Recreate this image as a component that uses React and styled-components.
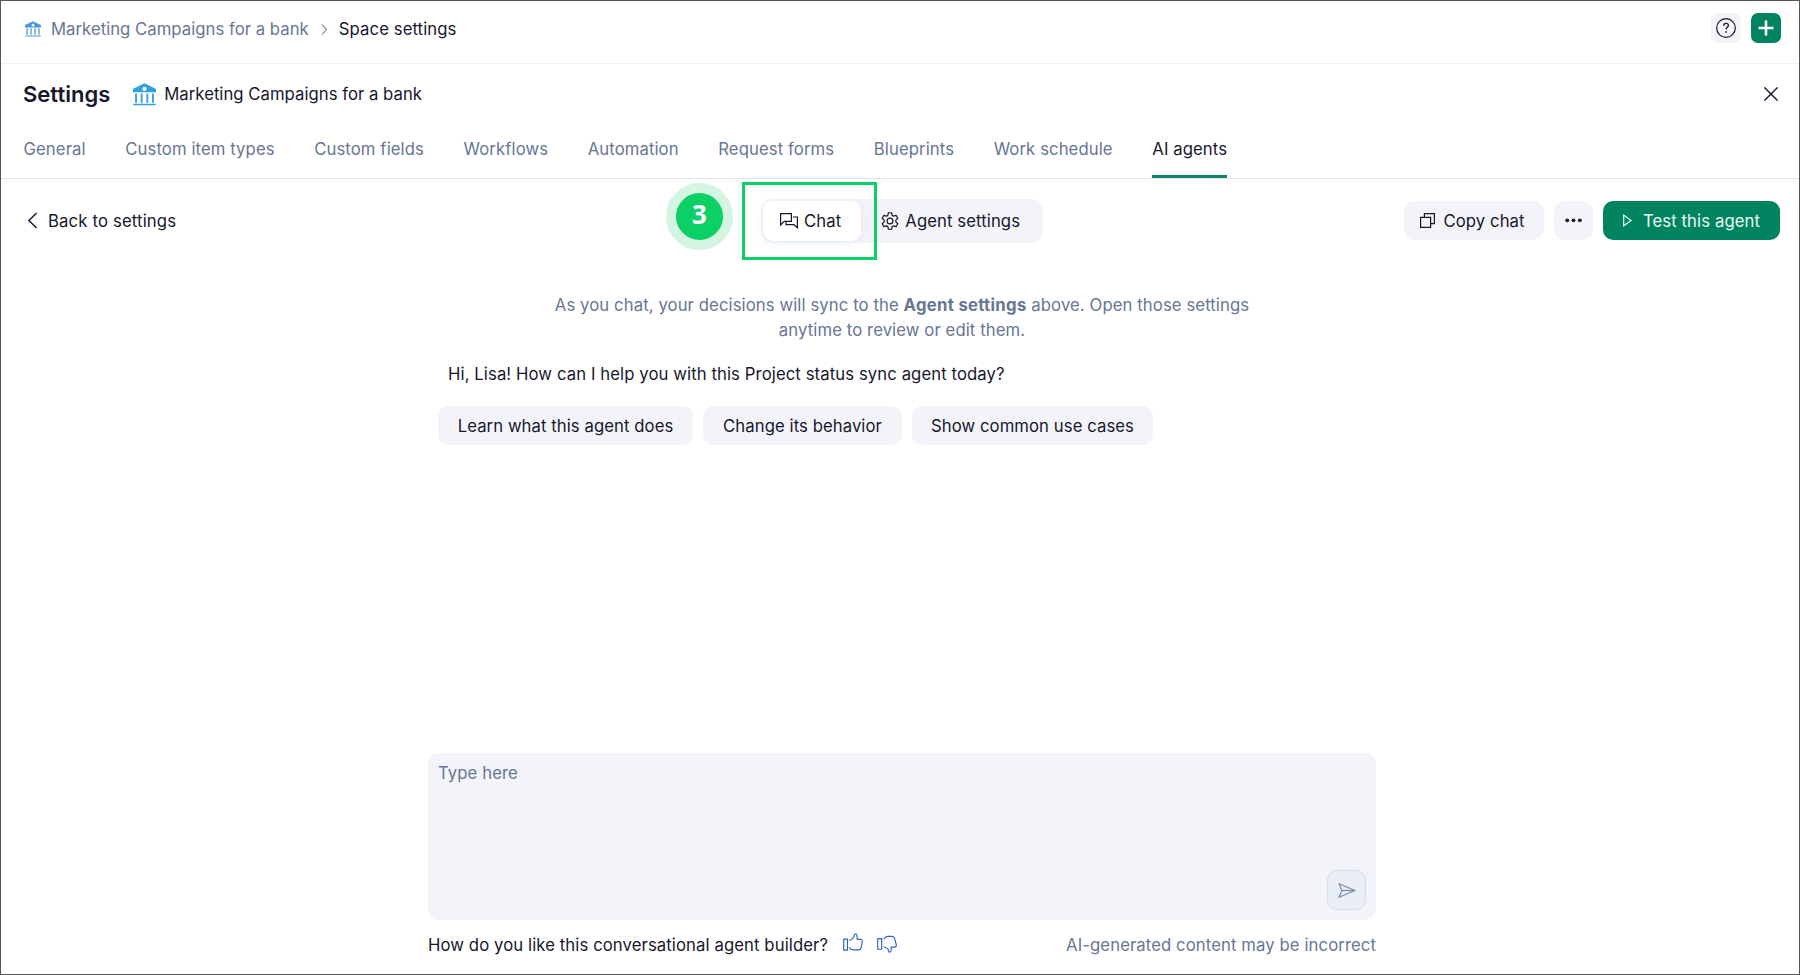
import styled, { createGlobalStyle } from "styled-components";

const GlobalStyle = createGlobalStyle`
  * {
    box-sizing: border-box;
  }
  body {
    margin: 0;
    background: #fff;
    color: #17162c;
    font-family: Inter, "Liberation Sans", sans-serif;
    font-size: 16.7px;
    letter-spacing: 0.095px;
    line-height: 25px;
  }
  button,
  textarea {
    font: inherit;
    letter-spacing: inherit;
    color: inherit;
    border: 0;
    padding: 0;
    margin: 0;
    background: none;
  }
  svg {
    display: block;
    flex: none;
  }
`;

const Page = styled.div`
  width: 1800px;
  height: 975px;
  border: 1px solid #555558;
  display: flex;
  flex-direction: column;
  overflow: hidden;
`;

const TopBar = styled.header`
  height: 63px;
  padding: 0 18px 8px 24px;
  border-bottom: 1px solid #f1f1f4;
  display: flex;
  align-items: center;
  justify-content: space-between;
`;

const Breadcrumbs = styled.nav`
  display: flex;
  align-items: center;
  padding-top: 2px;
`;

const SpaceLink = styled.a`
  color: #667694;
  letter-spacing: 0.03px;
  margin: 0 12px 0 10px;
`;

const CurrentPage = styled.span`
  margin-left: 11px;
`;

const TopActions = styled.div`
  display: flex;
  gap: 10px;
`;

const SquareButton = styled.button`
  width: 30px;
  height: 30px;
  border-radius: 7px;
  background: ${(p) => (p.$primary ? "#00835f" : "#f3f4fa")};
  display: flex;
  align-items: center;
  justify-content: center;
`;

const TitleBar = styled.div`
  height: 63px;
  padding: 0 21px 3px 22px;
  display: flex;
  align-items: center;
`;

const Title = styled.h1`
  margin: 0 23px 0 0;
  font-size: 22px;
  font-weight: 600;
  letter-spacing: 0;
`;

const SpaceName = styled.span`
  flex: 1;
  margin-left: 8px;
  letter-spacing: 0.03px;
`;

const Tabs = styled.nav`
  height: 52px;
  padding-left: 22.5px;
  border-bottom: 1px solid #dbe2ee;
  display: flex;
  gap: 39.6px;
`;

const Tab = styled.a`
  height: 51px;
  padding-top: 10px;
  border-bottom: 3px solid ${(p) => (p.$active ? "#0b8563" : "transparent")};
  color: ${(p) => (p.$active ? "#17162c" : "#667694")};
`;

const Toolbar = styled.div`
  height: 83px;
  padding: 0 19px 0 26px;
  display: grid;
  grid-template-columns: 734px 282px 1fr;
  align-items: center;
`;

const BackLink = styled.a`
  display: flex;
  align-items: center;
  gap: 10px;
  letter-spacing: 0.16px;
`;

const Label = styled.span`
  padding-top: 2px;
`;

const Switcher = styled.div`
  position: relative;
  height: 44px;
  padding: 2px;
  border-radius: 12px;
  background: #f3f4fa;
  display: flex;
  align-items: center;
`;

const Segment = styled.button`
  height: 40px;
  padding: 0 20px 0 ${(p) => (p.$active ? 17 : 20)}px;
  border-radius: 10px;
  background: ${(p) => (p.$active ? "#fff" : "transparent")};
  box-shadow: ${(p) => (p.$active ? "0 2px 10px rgba(200, 215, 235, 0.35)" : "none")};
  display: flex;
  align-items: center;
  gap: 6px;
  white-space: nowrap;
`;

const Highlight = styled.div`
  position: absolute;
  left: -19px;
  top: -16.5px;
  width: 135px;
  height: 78px;
  border: 3px solid #0bd066;
`;

const StepBadge = styled.div`
  position: absolute;
  left: -95px;
  top: -15.5px;
  width: 67px;
  height: 67px;
  border: 10.5px solid #d4f5e1;
  border-radius: 50%;
  background: #0bd066;
  color: #fff;
  font: 700 26px/43px "Open Sans", sans-serif;
  letter-spacing: 0;
  text-align: center;
`;

const ToolbarActions = styled.div`
  display: flex;
  justify-content: flex-end;
  gap: 10px;
`;

const Button = styled.button`
  height: 39px;
  width: ${(p) => p.$width}px;
  border-radius: 10px;
  background: ${(p) => (p.$primary ? "#00835f" : "#f3f4fa")};
  color: ${(p) => (p.$primary ? "#eefaf6" : "inherit")};
  display: flex;
  align-items: center;
  justify-content: center;
  gap: ${(p) => (p.$primary ? 11 : 8)}px;
  white-space: nowrap;
`;

const CopyButton = styled(Button)`
  padding-right: 3px;
`;

const Conversation = styled.main`
  width: 948px;
  margin-left: 427px;
  padding-top: 31px;
  flex: 1;
  display: flex;
  flex-direction: column;
`;

const SyncNote = styled.p`
  width: 720px;
  margin: 0 auto;
  text-align: center;
  color: #667694;
  b {
    letter-spacing: 0.3px;
  }
`;

const Greeting = styled.p`
  margin: 19px 0 0 20px;
`;

const Suggestions = styled.div`
  display: flex;
  gap: 10px;
  margin: 19px 0 0 10px;
  letter-spacing: 0.07px;
`;

const Composer = styled.div`
  height: 167px;
  margin-top: auto;
  padding: 8px 10px 10px;
  border-radius: 10px;
  background: #f3f4fa;
  display: flex;
  align-items: flex-end;
`;

const Input = styled.textarea`
  flex: 1;
  align-self: stretch;
  resize: none;
  outline: none;
  &::placeholder {
    color: #667694;
    opacity: 1;
  }
`;

const SendButton = styled.button`
  width: 39px;
  height: 40px;
  border: 1px solid #d4deed;
  border-radius: 10px;
  background: #eaeef6;
  display: flex;
  align-items: center;
  justify-content: center;
`;

const Footer = styled.footer`
  height: 54px;
  padding-top: 13px;
  display: flex;
  align-items: flex-start;
`;

const Thumb = styled.button`
  margin: ${(p) => (p.$down ? "2px 0 0 14px" : "0 0 0 15px")};
`;

const Disclaimer = styled.span`
  margin-left: auto;
  color: #667694;
`;

const BankIcon = ({ size, color }) => (
  <svg width={size} height={size} viewBox="0 0 22 22" fill={color}>
    <path
      fillRule="evenodd"
      d="M11 0.3 21.2 5.2Q22 5.6 22 6.4V8.8H0V6.4Q0 5.6 .8 5.2ZM11 3.7A2 2 0 1 0 11 7.7A2 2 0 1 0 11 3.7Z"
    />
    <path d="M2 10h1.8v9H2zM7.4 10h1.8v9H7.4zM12.8 10h1.8v9h-1.8zM18.2 10H20v9h-1.8zM.3 19.8h21.4v1.6H.3z" />
  </svg>
);

const Chevron = ({ width, height, left, color, weight }) => (
  <svg width={width} height={height} viewBox="0 0 10 18" fill="none" stroke={color} strokeWidth={weight}>
    <path d={left ? "M9.3 1 1.2 9l8.1 8" : "M1 1l7.5 8L1 17"} />
  </svg>
);

const HelpIcon = () => (
  <svg width="20" height="20" viewBox="0 0 20 20" fill="none" stroke="#17162c" strokeWidth="1.2">
    <circle cx="10" cy="10" r="9.3" />
    <path d="M7.7 7.7C7.7 6.3 8.6 5.4 10 5.4s2.4.9 2.4 2.1c0 1.8-2.3 1.9-2.3 4.1" strokeWidth="1.3" />
    <path d="M9.3 13.2h1.6v1.5H9.3z" fill="#17162c" stroke="none" />
  </svg>
);

const PlusIcon = () => (
  <svg width="16" height="16" viewBox="0 0 16 16" fill="#fff">
    <path d="M6.7.5h2.6v15H6.7zM.5 6.7h15v2.6H.5z" />
  </svg>
);

const CloseIcon = () => (
  <svg width="14" height="14" viewBox="0 0 14 14" stroke="#17162c" strokeWidth="1.4">
    <path d="M.4.4l13.2 13.2M13.6.4.4 13.6" />
  </svg>
);

const ChatIcon = () => (
  <svg width="18" height="17" viewBox="0 0 18 17" fill="none" stroke="#17162c" strokeWidth="1.2">
    <path d="M.6 13V1.6h10.8v7.8H4.2Z" />
    <path d="M13 5h4.4v10.8L14 12.6H6V9.6" />
  </svg>
);

// Six rounded teeth around a small hub.
const GearIcon = () => (
  <svg width="18" height="18" viewBox="0 0 24 24" fill="none" stroke="#17162c" strokeWidth="1.6" strokeLinejoin="round">
    <circle cx="12" cy="12" r="3.9" />
    <path d="M9.9 1h4.2l.8 3.5 1.9 1.1 3.5-1 2.1 3.7-2.6 2.5v2.4l2.6 2.5-2.1 3.7-3.5-1-1.9 1.1-.8 3.5H9.9l-.8-3.5-1.9-1.1-3.5 1-2.1-3.7 2.6-2.5v-2.4L1.6 8.3l2.1-3.7 3.5 1 1.9-1.1Z" />
  </svg>
);

const CopyIcon = () => (
  <svg width="15" height="15" viewBox="0 0 15 15" fill="none" stroke="#17162c" strokeWidth="1.2">
    <path d="M.6 4.4h10v10H.6z" />
    <path d="M4.4 4.4V.6h10v10h-3.8" />
  </svg>
);

const DotsIcon = () => (
  <svg width="17" height="5" viewBox="0 0 17 5" fill="#17162c">
    <circle cx="2.2" cy="2.3" r="1.9" />
    <circle cx="8.5" cy="2.3" r="1.9" />
    <circle cx="14.8" cy="2.3" r="1.9" />
  </svg>
);

const PlayIcon = () => (
  <svg width="9" height="13" viewBox="0 0 9 13" fill="none" stroke="#eefaf6" strokeWidth="1.2">
    <path d="M.7 1.1v10.6L8 6.4Z" />
  </svg>
);

const SendIcon = () => (
  <svg width="18" height="15" viewBox="0 0 18 15" fill="none" stroke="#7c8aa8" strokeWidth="1.2" strokeLinejoin="round">
    <path d="M.9.8 17 7.5.9 14.3 4 7.5Z" />
    <path d="M4 7.5h13" />
  </svg>
);

const ThumbIcon = ({ down }) => (
  <svg width="20" height="18" viewBox="0 0 20 18" fill="none" stroke="#2f63c0" strokeWidth="1.15" strokeLinejoin="round">
    {down ? (
      <>
        <path d="M.7 3.6h4v10.6h-4z" />
        <path d="M6.6 4.3Q8.3 1.6 10.5 1.4h4.1q2.5.1 3.1 2.2l1.6 6.2q.3 2.1-1.6 2.3h-3.5v3.2q-.1 1.8-1.5 1.8-1 0-1.1-1.1c0-2.4-2.6-3.5-5-4.2" />
      </>
    ) : (
      <>
        <path d="M.7 6.1h3.8v11H.7z" />
        <path d="M6.2 7.4c3.1-1 4.8-3 5-5.2Q11.4.7 12.7.7q1.4.2 1.4 1.8v3.8h3.6q1.8.2 1.6 2l-1.1 6q-.5 2.4-2.7 2.6h-5q-2.6 0-4.3-2.2" />
      </>
    )}
  </svg>
);

const tabs = [
  "General",
  "Custom item types",
  "Custom fields",
  "Workflows",
  "Automation",
  "Request forms",
  "Blueprints",
  "Work schedule",
  "AI agents",
];

const suggestions = [
  { label: "Learn what this agent does", width: 255 },
  { label: "Change its behavior", width: 199 },
  { label: "Show common use cases", width: 241 },
];

export default function App() {
  return (
    <Page>
      <GlobalStyle />
      <TopBar>
        <Breadcrumbs>
          <BankIcon size={16} color="#4a98da" />
          <SpaceLink>Marketing Campaigns for a bank</SpaceLink>
          <Chevron width={7} height={11} color="#8290ab" weight={1.8} />
          <CurrentPage>Space settings</CurrentPage>
        </Breadcrumbs>
        <TopActions>
          <SquareButton aria-label="Help">
            <HelpIcon />
          </SquareButton>
          <SquareButton $primary aria-label="Add">
            <PlusIcon />
          </SquareButton>
        </TopActions>
      </TopBar>
      <TitleBar>
        <Title>Settings</Title>
        <BankIcon size={23} color="#31a0e0" />
        <SpaceName>Marketing Campaigns for a bank</SpaceName>
        <button aria-label="Close">
          <CloseIcon />
        </button>
      </TitleBar>
      <Tabs>
        {tabs.map((tab) => (
          <Tab key={tab} $active={tab === "AI agents"}>
            {tab}
          </Tab>
        ))}
      </Tabs>
      <Toolbar>
        <BackLink>
          <Chevron left width={11} height={17} color="#17162c" weight={1.5} />
          <Label>Back to settings</Label>
        </BackLink>
        <Switcher>
          <Segment $active>
            <ChatIcon />
            <Label>Chat</Label>
          </Segment>
          <Segment>
            <GearIcon />
            <Label>Agent settings</Label>
          </Segment>
          <Highlight />
          <StepBadge>3</StepBadge>
        </Switcher>
        <ToolbarActions>
          <CopyButton $width={140}>
            <CopyIcon />
            <Label>Copy chat</Label>
          </CopyButton>
          <Button $width={39} aria-label="More">
            <DotsIcon />
          </Button>
          <Button $primary $width={177}>
            <PlayIcon />
            <Label>Test this agent</Label>
          </Button>
        </ToolbarActions>
      </Toolbar>
      <Conversation>
        <SyncNote>
          As you chat, your decisions will sync to the <b>Agent settings</b>{" "}
          above. Open those settings anytime to review or edit them.
        </SyncNote>
        <Greeting>
          Hi, Lisa! How can I help you with this Project status sync agent
          today?
        </Greeting>
        <Suggestions>
          {suggestions.map((s) => (
            <Button key={s.label} $width={s.width}>
              <Label>{s.label}</Label>
            </Button>
          ))}
        </Suggestions>
        <Composer>
          <Input placeholder="Type here" />
          <SendButton aria-label="Send">
            <SendIcon />
          </SendButton>
        </Composer>
        <Footer>
          How do you like this conversational agent builder?
          <Thumb aria-label="Like">
            <ThumbIcon />
          </Thumb>
          <Thumb $down aria-label="Dislike">
            <ThumbIcon down />
          </Thumb>
          <Disclaimer>AI-generated content may be incorrect</Disclaimer>
        </Footer>
      </Conversation>
    </Page>
  );
}
